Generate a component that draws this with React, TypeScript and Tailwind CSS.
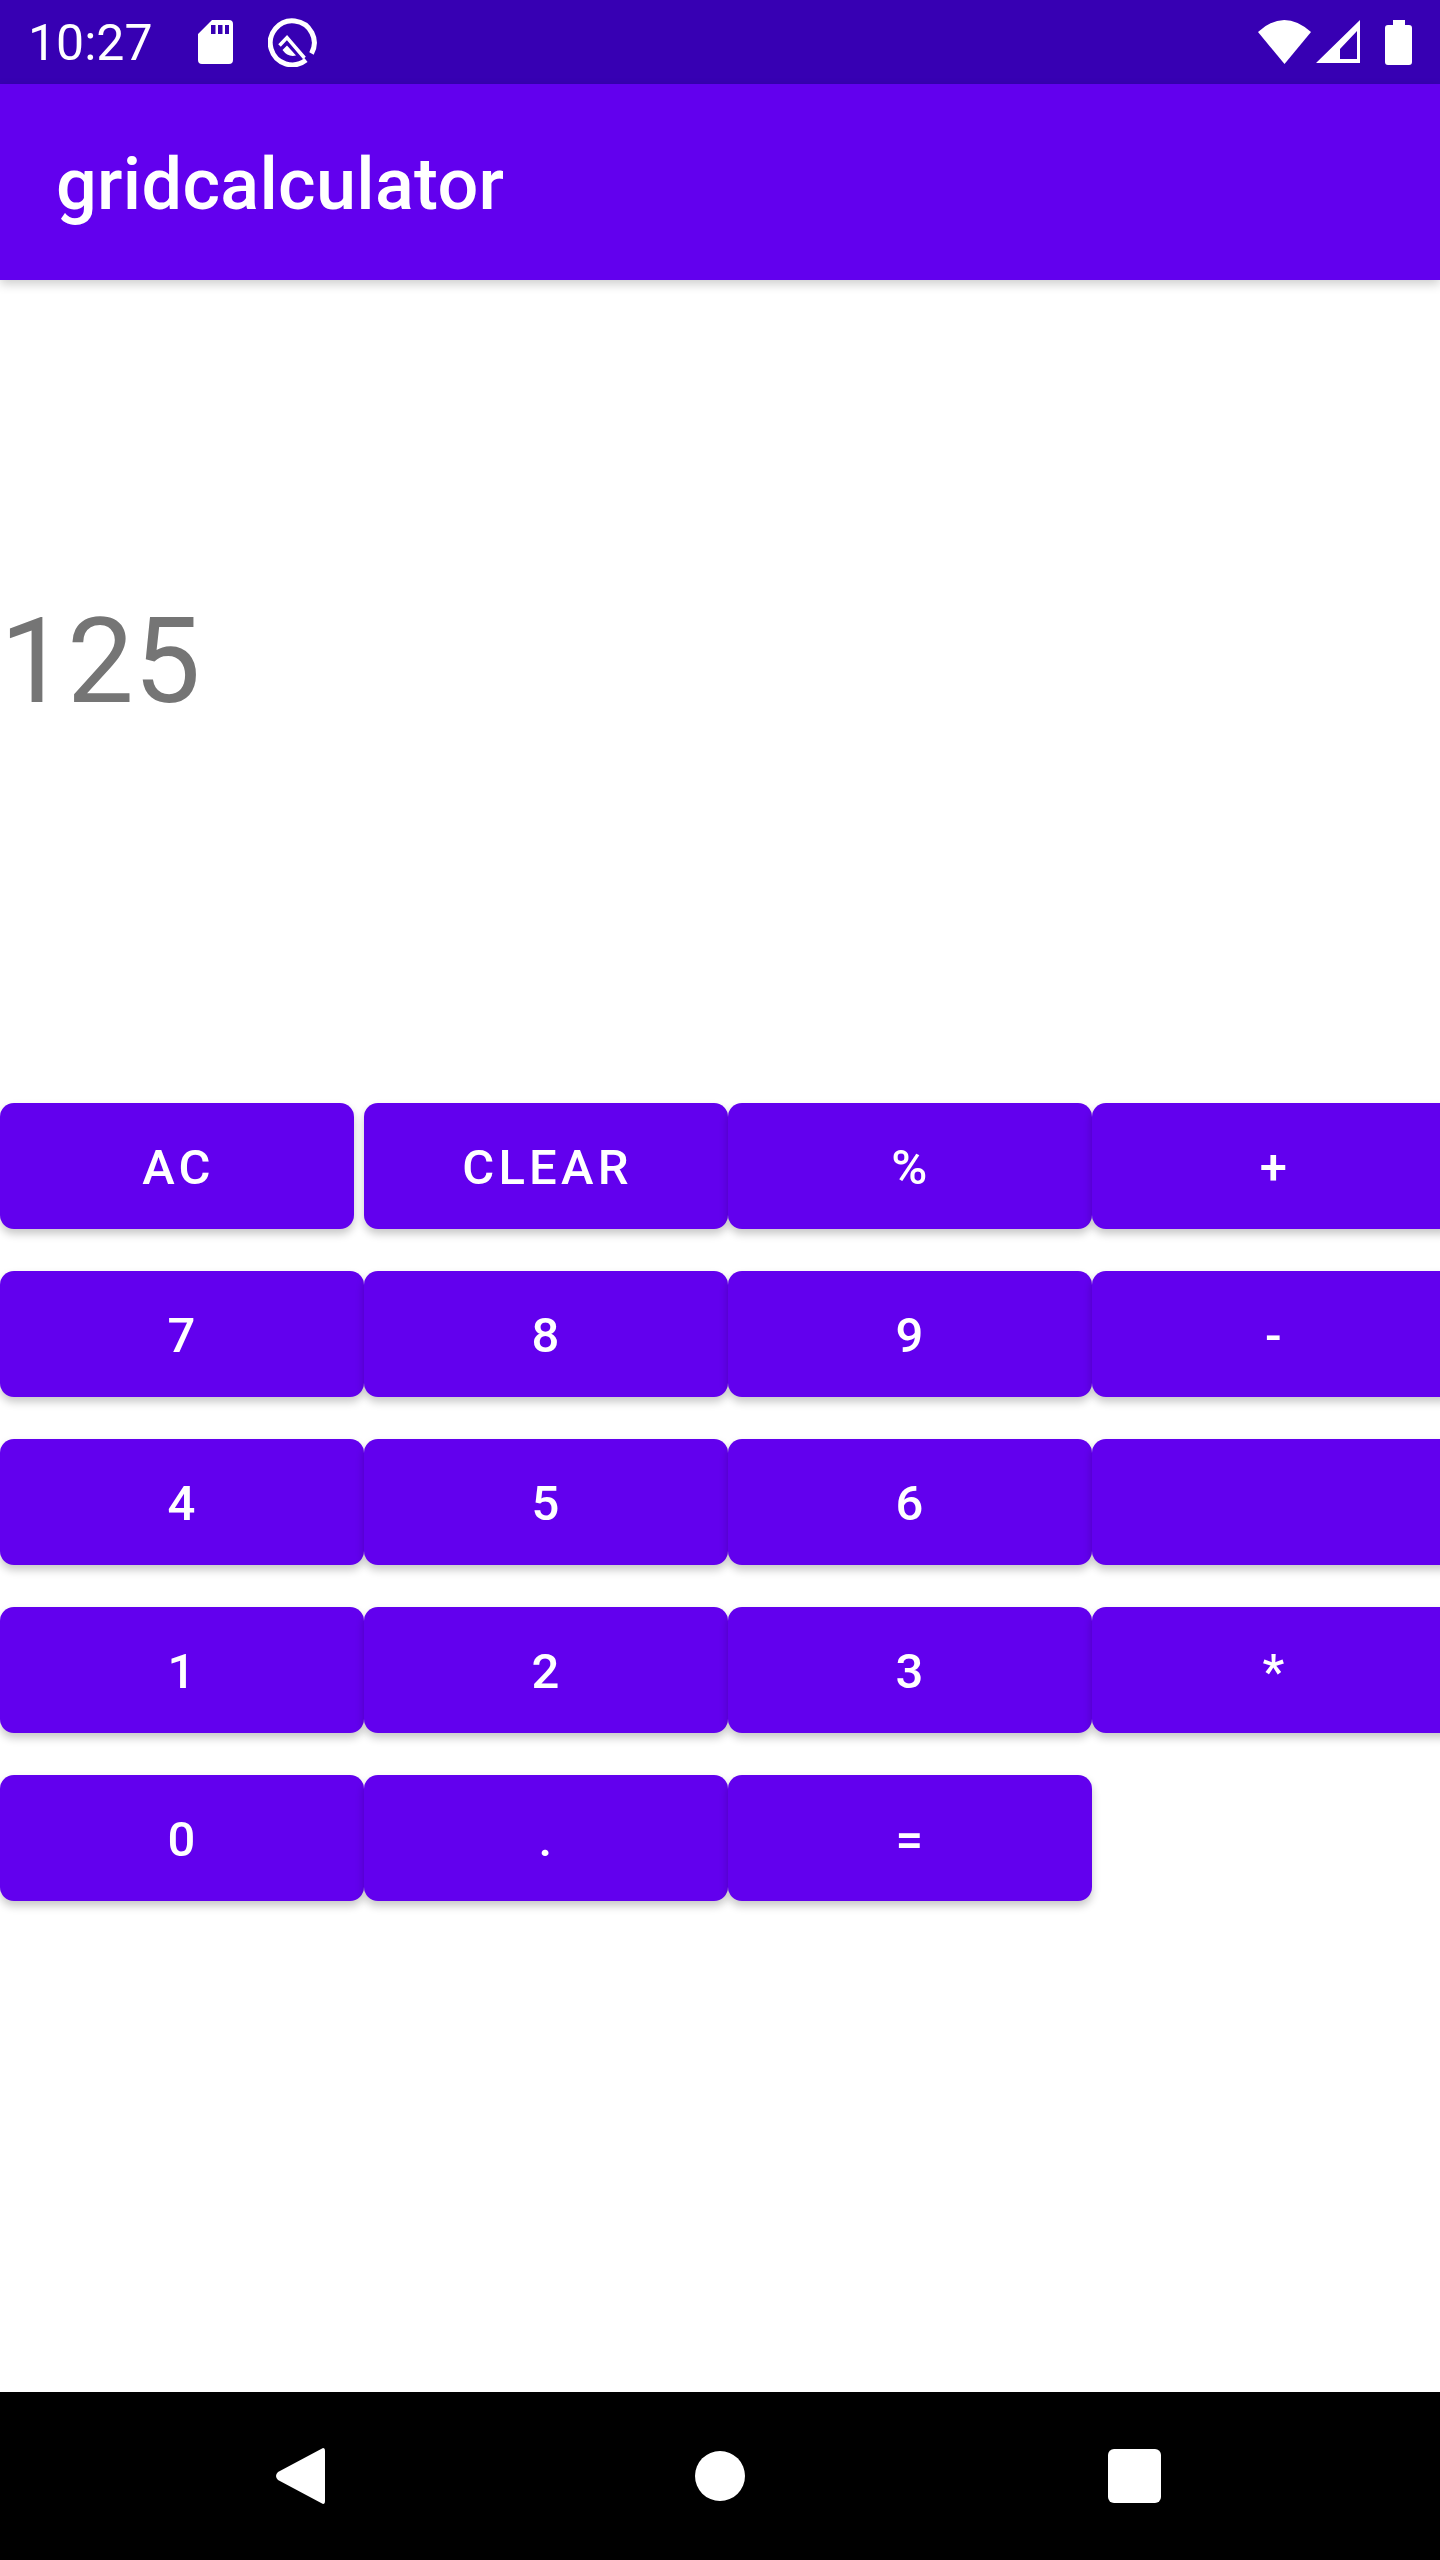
const keys = [
  ['7', '8', '9', '-'],
  ['4', '5', '6', ''],
  ['1', '2', '3', '*'],
  ['0', '.', '='],
];

function Key({ label, className = 'w-[364px]' }: { label: string; className?: string }) {
  return (
    <button className={`${className} h-[126px] rounded-[14px] bg-[#6200EE] text-white text-[49px] font-medium tracking-[4.2px] pt-[4px] pl-[3px] shadow-[0_5px_8px_rgba(0,0,0,0.22)] flex items-center justify-center`}>
      {label}
    </button>
  );
}

function StatusBar() {
  return (
    <div className="h-[84px] bg-[#3700B3] flex items-center relative shrink-0">
      <span className="ml-[28px] w-[170px] text-white text-[50px] leading-[84px] pt-[2px]">10:27</span>
      <svg width="35" height="44" viewBox="0 0 35 44">
        <path fill="white" fillRule="evenodd" d="M14 0H31Q35 0 35 4V40Q35 44 31 44H4Q0 44 0 40V14ZM13 5V14H17.5V5ZM20 5V14H24.5V5ZM27 5V14H31V5Z" />
      </svg>
      <svg width="49" height="49" viewBox="0 0 49 49" className="ml-[35px]">
        <path fill="none" stroke="white" strokeWidth="5" d="M38 42A22 22 0 1 1 43.5 35.5" />
        <path fill="none" stroke="white" strokeWidth="3.5" d="M11.5 27.5L19 19.5 36.5 40" />
        <path fill="white" d="M14.5 32L19 27.5 28 37.5Q20 39.5 14.5 32Z" />
      </svg>
      <div className="ml-auto flex items-center">
        <svg width="53" height="44" viewBox="0 0 53 44">
          <path fill="white" d="M0 12Q26 -12 53 12L26.5 44Z" />
        </svg>
        <svg width="44" height="44" viewBox="0 0 44 44" className="ml-[5px]">
          <path fill="white" fillRule="evenodd" d="M44 0V43H0ZM41 11L24 29V39H41Z" />
        </svg>
        <svg width="27" height="45" viewBox="0 0 27 45" className="ml-[25px] mr-[28px]">
          <path fill="white" d="M8 0H20V5H24Q27 5 27 8V42Q27 45 24 45H3Q0 45 0 42V8Q0 5 3 5H8Z" />
        </svg>
      </div>
    </div>
  );
}

function NavBar() {
  return (
    <div className="h-[168px] bg-black flex items-center shrink-0">
      <svg width="50" height="56" viewBox="0 0 50 56" className="ml-[275px]">
        <path fill="white" d="M48 0Q50 0 50 3V53Q50 56 48 56L3 32Q-1 28 3 24Z" />
      </svg>
      <div className="ml-[370px] w-[50px] h-[50px] rounded-full bg-white" />
      <div className="ml-[363px] w-[53px] h-[54px] rounded-[6px] bg-white" />
    </div>
  );
}

export default function App() {
  return (
    <div className="w-[1440px] h-[2560px] overflow-hidden flex flex-col bg-white font-['Roboto',sans-serif]">
      <StatusBar />
      <header className="h-[196px] bg-[#6200EE] flex items-center pl-[56px] shrink-0 shadow-[0_4px_10px_rgba(0,0,0,0.2)] z-10">
        <h1 className="text-white text-[72px] tracking-[0.3px] font-medium pt-[5px]">gridcalculator</h1>
      </header>
      <div className="h-[823px] flex items-center shrink-0 pb-[60px]">
        <span className="text-[#757575] text-[119px] leading-none">125</span>
      </div>
      <div className="grid grid-cols-[repeat(4,364px)] gap-y-[42px] w-[1456px]">
        <Key label="AC" className="w-[354px]" />
        <Key label="CLEAR" />
        <Key label="%" />
        <Key label="+" />
        {keys.flat().map((k, i) => (
          <Key key={i} label={k} />
        ))}
      </div>
      <div className="flex-1" />
      <NavBar />
    </div>
  );
}
